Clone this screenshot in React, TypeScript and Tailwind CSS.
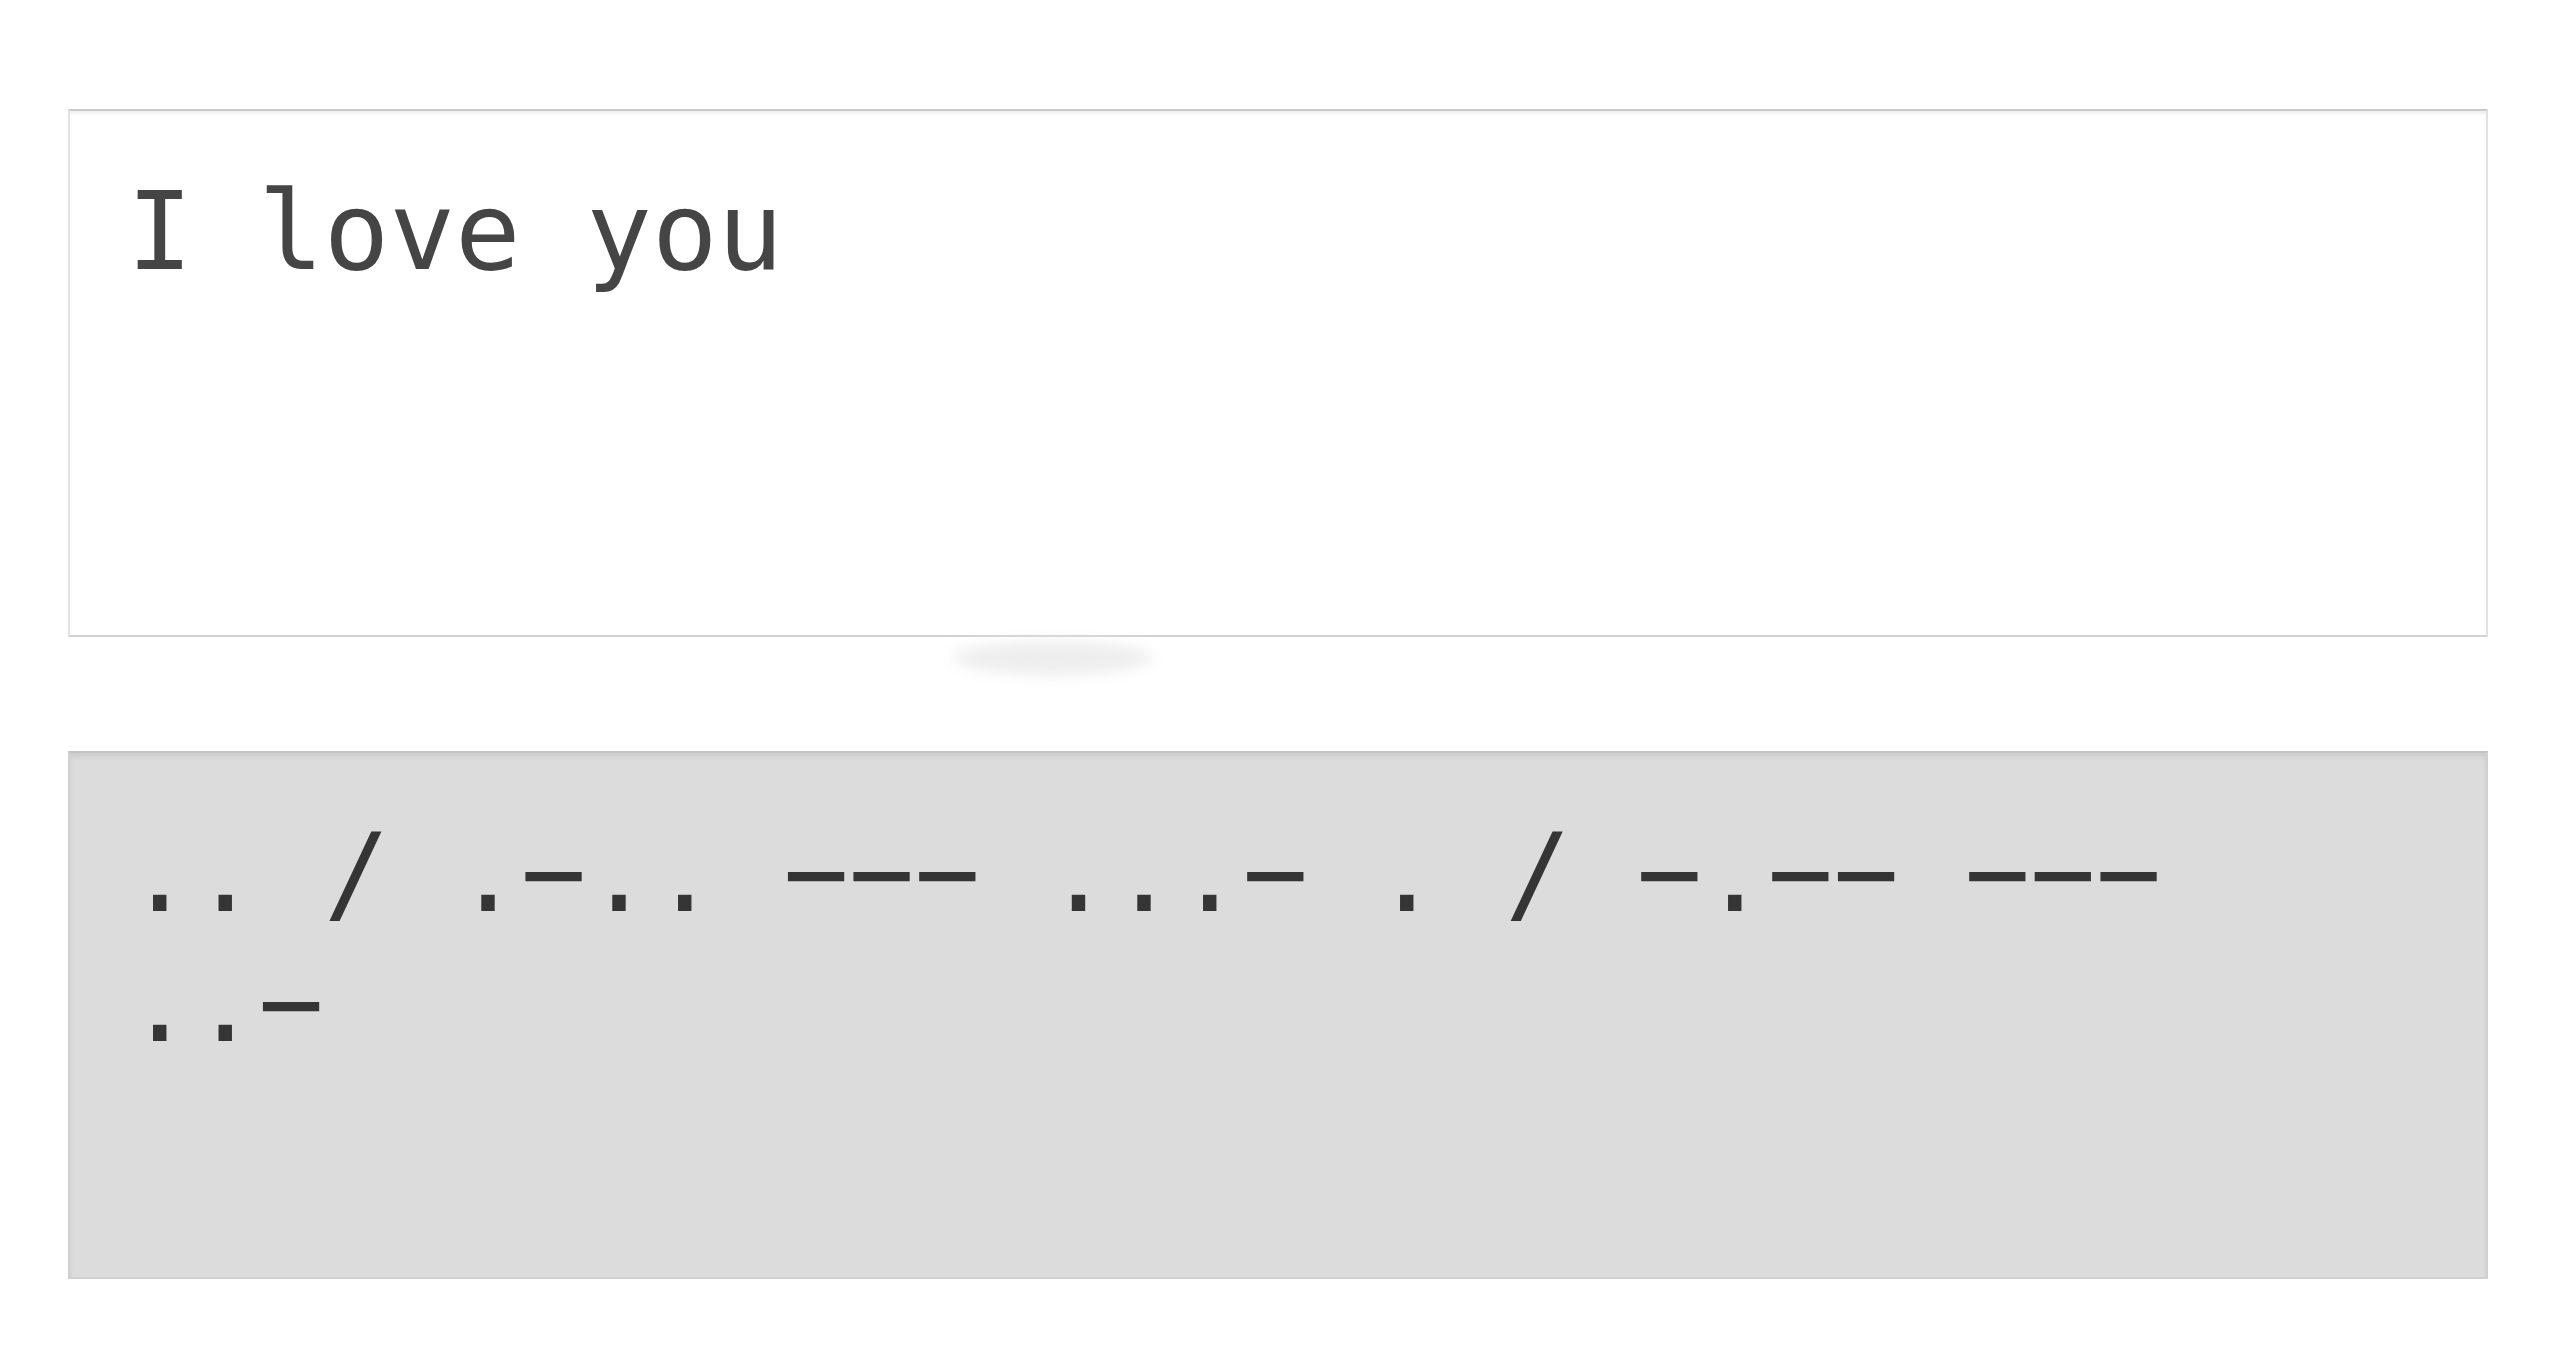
import React, { useState } from "react";

const MORSE: Record<string, string> = {
  a: ".-", b: "-...", c: "-.-.", d: "-..", e: ".", f: "..-.", g: "--.", h: "....",
  i: "..", j: ".---", k: "-.-", l: ".-..", m: "--", n: "-.", o: "---", p: ".--.",
  q: "--.-", r: ".-.", s: "...", t: "-", u: "..-", v: "...-", w: ".--", x: "-..-",
  y: "-.--", z: "--..",
  "0": "-----", "1": ".----", "2": "..---", "3": "...--", "4": "....-",
  "5": ".....", "6": "-....", "7": "--...", "8": "---..", "9": "----.",
};

// words are split by "/", letters by a single space
const toMorse = (text: string): string[] =>
  text
    .trim()
    .toLowerCase()
    .split(/\s+/)
    .map(word => word.split("").map(ch => MORSE[ch] ?? "").filter(Boolean).join(" "))
    .join(" / ")
    .split(" ")
    .filter(Boolean);

const boxText = "block w-full h-[528px] pl-[57px] pr-[120px] py-[56px] text-[109px] leading-[130px] font-['DejaVu_Sans_Mono',monospace] resize-none outline-none";

export default function App() {
  const [text, setText] = useState("I love you");
  const codes = toMorse(text);

  return (
    <div className="min-h-screen bg-white pl-[68px] pr-[72px] pt-[109px] flex flex-col gap-[114px]">
      <div className="relative">
        <textarea
          value={text}
          onChange={e => setText(e.target.value)}
          spellCheck={false}
          className={`${boxText} bg-white text-[#454545] border-2 border-[#e2e2e2] border-t-[#c9c9c9] border-b-[#d2d2d2] shadow-[inset_0_3px_3px_rgba(0,0,0,0.06)]`}
        />
        {/* soft drop under the input */}
        <div className="absolute left-[885px] top-[532px] w-[200px] h-[34px] rounded-[50%] bg-[#eeeeee] blur-[7px] pointer-events-none" />
      </div>
      <div
        className={`${boxText} bg-[#dcdcdc] text-[#353535] border-2 border-[#d0d0d0] border-t-[#c4c4c4] shadow-[inset_0_4px_4px_rgba(0,0,0,0.07)]`}
      >
        {codes.map((code, i) => (
          <React.Fragment key={i}>
            {i > 0 && " "}
            {/* minus glyph is wider than a hyphen; keep each letter on one line */}
            <span className="whitespace-nowrap">{code.replace(/-/g, "\u2212")}</span>
          </React.Fragment>
        ))}
      </div>
    </div>
  );
}
